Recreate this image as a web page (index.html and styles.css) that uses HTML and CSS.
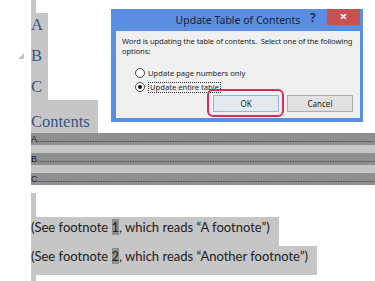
FILE: index.html
```html
<!DOCTYPE html>
<html lang="en">

<head>
    <meta charset="UTF-8" />
    <meta name="viewport" content="width=device-width, initial-scale=1.0" />
    <title>Update Table of Contents</title>
    <link rel="stylesheet" href="styles.css">
</head>

<body>
    <!-- Word document with everything selected -->
    <div class="doc">
        <div class="mark mark-top"></div>
        <div class="headings">
            <h1 class="heading">A</h1>
            <h1 class="heading heading-fold">B</h1>
            <h1 class="heading">C</h1>
        </div>
        <div class="toc-title">Contents</div>
        <div class="toc">
            <div class="toc-row">A</div>
            <div class="toc-row">B</div>
            <div class="toc-row">C</div>
        </div>
        <div class="mark mark-gap"></div>
        <p class="note">(See footnote <span class="ref">1</span>, which reads “A footnote”)</p>
        <p class="note">(See footnote <span class="ref">2</span>, which reads “Another footnote”)</p>
        <div class="mark mark-end"></div>
    </div>

    <!-- Dialog on top of the document -->
    <div class="dialog">
        <div class="dialog-title">
            <span class="dialog-caption">Update Table of Contents</span>
            <span class="dialog-help">?</span>
            <span class="dialog-close">×</span>
        </div>
        <div class="dialog-body">
            <p class="dialog-text">Word is updating the table of contents.&nbsp; Select one of the following options:</p>
            <div class="options">
                <label class="option"><span class="radio"></span><span>Update page numbers only</span></label>
                <label class="option"><span class="radio checked"></span><span class="focus">Update entire table</span></label>
            </div>
            <div class="buttons">
                <button class="btn btn-ok">OK</button>
                <button class="btn">Cancel</button>
            </div>
        </div>
    </div>
</body>

</html>
```

FILE: styles.css
```css
body {
    margin: 0;
    background: white;
    font-family: 'Lato', sans-serif;
    overflow: hidden;
}

/* Document */
.doc {
    padding-left: 31px;
}

.mark {
    width: 5px;
    background: #c6c6c6;
}

.mark-top {
    height: 13px;
}

.mark-gap {
    height: 24px;
}

.mark-end {
    height: 10px;
}

.headings {
    width: 17px;
    height: 87px;
    background: #c6c6c6;
}

.heading,
.toc-title {
    margin: 0;
    font-family: 'Liberation Serif', serif;
    font-size: 16.5px;
    font-weight: normal;
    color: #34557f;
}

.heading {
    line-height: 24px;
    margin-bottom: 7px;
    position: relative;
}

.heading:last-child {
    margin-bottom: 0;
}

/* collapse arrow in the left margin */
.heading-fold::before {
    content: "";
    position: absolute;
    left: -13px;
    top: 9px;
    width: 0;
    height: 0;
    border-left: 6px solid transparent;
    border-bottom: 6px solid #c4c4c4;
}

.toc-title {
    width: 67px;
    height: 23px;
    padding-top: 10px;
    line-height: 23px;
    background: #c6c6c6;
}

.toc {
    background: #c6c6c6;
}

.toc-row {
    height: 12px;
    margin-bottom: 8px;
    background: #8f8f8f;
    font-family: 'Liberation Sans', sans-serif;
    font-size: 9px;
    line-height: 13px;
    color: #1a1a1a;
    white-space: nowrap;
    overflow: hidden;
}

.toc-row::after {
    content: "...................................................................................................................................................................................";
}

.note {
    margin: 0;
    width: fit-content;
    padding: 0 9px 9px 0;
    font-size: 13px;
    line-height: 20px;
    color: #222;
    background: #c6c6c6;
}

.ref {
    background: #8f8f8f;
}

/* Dialog */
.dialog {
    position: absolute;
    left: 111px;
    top: 9px;
    width: 252px;
    height: 113px;
    box-sizing: border-box;
    padding: 0 3px 4px 5px;
    background: #5b8de2;
    display: flex;
    flex-direction: column;
    font-family: 'Noto Sans', sans-serif;
}

.dialog-title {
    height: 22px;
    display: flex;
    align-items: flex-start;
}

.dialog-caption {
    flex: 1;
    text-align: center;
    font-size: 10.5px;
    line-height: 18px;
    padding: 2px 0 0 50px;
    color: #1a2438;
}

.dialog-help {
    width: 10px;
    font-size: 12px;
    font-weight: bold;
    line-height: 18px;
    color: #17356b;
    margin-right: 7px;
}

.dialog-close {
    width: 33px;
    height: 16px;
    background: #c75050;
    color: white;
    text-align: center;
    font-size: 13px;
    font-weight: bold;
    line-height: 15px;
}

.dialog-body {
    flex: 1;
    background: #f0f0f0;
    display: flex;
    flex-direction: column;
    font-size: 7.6px;
    color: #1e1e1e;
}

.dialog-text {
    margin: 0;
    padding: 6px 5px 0 6px;
    line-height: 9.5px;
    letter-spacing: -0.1px;
}

.options {
    margin-top: 10px;
    padding-left: 19px;
}

.option {
    display: flex;
    align-items: center;
    gap: 3px;
    height: 14px;
}

.radio {
    width: 8px;
    height: 8px;
    border: 1px solid #444;
    border-radius: 50%;
    background: white;
    position: relative;
}

.radio.checked::after {
    content: "";
    position: absolute;
    left: 2px;
    top: 2px;
    width: 4px;
    height: 4px;
    border-radius: 50%;
    background: #111;
}

.focus {
    border: 1px dotted #333;
    padding: 0 1px;
    line-height: 9px;
}

.buttons {
    margin-top: auto;
    display: flex;
    justify-content: flex-end;
    gap: 8px;
    padding: 0 7px 6px 0;
}

.btn {
    width: 66px;
    height: 17px;
    padding: 0;
    border: 1px solid #adadad;
    background: #e1e1e1;
    font-family: 'Noto Sans', sans-serif;
    font-size: 8px;
    color: #1e1e1e;
}

.btn-ok {
    border-color: #8fb8de;
    background: #e4e9ee;
    position: relative;
}

/* red annotation ring drawn around OK */
.btn-ok::after {
    content: "";
    position: absolute;
    left: -7px;
    top: -7px;
    right: -6px;
    bottom: -6px;
    border: 2px solid #dd2a5c;
    border-radius: 6px;
}
```
